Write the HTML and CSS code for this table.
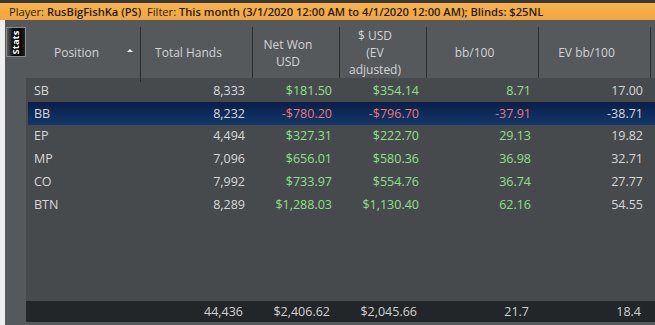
FILE: index.html
```html
<!DOCTYPE html>
<html>
<head>
<meta charset="utf-8">
<link rel="stylesheet" href="styles.css">
</head>
<body>
<div class="topstrip"></div>
<div class="filterbar">Player: <b>RusBigFishKa (PS)</b>&nbsp; Filter: <b>This month (3/1/2020 12:00 AM to 4/1/2020 12:00 AM); Blinds: $25NL</b></div>
<div class="main">
  <div class="edge"></div>
  <div class="side"><div class="tab"><span>Stats</span></div></div>
  <div class="table">
    <div class="head">
      <div class="hc pos">Position<span class="arrow"></span></div>
      <div class="hc">Total Hands</div>
      <div class="hc">Net Won<br>USD</div>
      <div class="hc">$ USD<br>(EV<br>adjusted)</div>
      <div class="hc">bb/100</div>
      <div class="hc">EV bb/100</div>
      <div class="hc last"></div>
    </div>
    <div class="rows">
      <div class="row"><span class="l">SB</span><span>8,333</span><span class="g">$181.50</span><span class="g">$354.14</span><span class="g">8.71</span><span>17.00</span></div>
      <div class="row sel"><span class="l">BB</span><span>8,232</span><span class="r">-$780.20</span><span class="r">-$796.70</span><span class="r">-37.91</span><span>-38.71</span></div>
      <div class="row"><span class="l">EP</span><span>4,494</span><span class="g">$327.31</span><span class="g">$222.70</span><span class="g">29.13</span><span>19.82</span></div>
      <div class="row"><span class="l">MP</span><span>7,096</span><span class="g">$656.01</span><span class="g">$580.36</span><span class="g">36.98</span><span>32.71</span></div>
      <div class="row"><span class="l">CO</span><span>7,992</span><span class="g">$733.97</span><span class="g">$554.76</span><span class="g">36.74</span><span>27.77</span></div>
      <div class="row"><span class="l">BTN</span><span>8,289</span><span class="g">$1,288.03</span><span class="g">$1,130.40</span><span class="g">62.16</span><span>54.55</span></div>
    </div>
    <div class="foot"><span></span><span>44,436</span><span>$2,406.62</span><span>$2,045.66</span><span>21.7</span><span>18.4</span></div>
    <div class="bottom"></div>
  </div>
</div>
</body>
</html>
```
FILE: styles.css
```css
html, body { margin: 0; padding: 0; }
body {
  width: 655px; height: 325px; overflow: hidden;
  font-family: "Open Sans", "DejaVu Sans", sans-serif;
  background: #55595c;
  display: flex; flex-direction: column;
}
.topstrip { height: 3px; background: #35393c; }
.filterbar {
  height: 17px; line-height: 17px;
  background: linear-gradient(#f8b24b, #f3a63f);
  color: #1c1c1c; font-size: 11.15px; padding-left: 9px;
  white-space: nowrap;
}
.filterbar b { font-weight: 600; }
.main { flex: 1; display: flex; min-height: 0; }
.edge { width: 5px; background: #eeeeee; }
.side { width: 21px; background: #55595c; }
.tab {
  margin: 7px 0 0 1px; width: 18px; height: 28px;
  border: 1px solid #8a8d90;
  background: linear-gradient(90deg, #5a5a5a, #000 40%, #000 70%, #222);
  display: flex; align-items: center; justify-content: center;
}
.tab span {
  transform: rotate(-90deg); color: #fff; font-size: 9.5px; font-weight: 700;
  white-space: nowrap; display: block;
}
.table { flex: 1; display: flex; flex-direction: column; }
.head, .row, .foot {
  display: grid;
  grid-template-columns: 115px 112px 87px 87px 112px 112px 1fr;
}
.head { height: 58px; background: #55595c; }
.hc {
  border-right: 1px solid #2b2e31; margin: 7px 0 4px;
  padding: 0 16px 4px 0;
  color: #d2d4d6; font-size: 12px; line-height: 17px;
  display: flex; align-items: center; justify-content: center; text-align: center;
}
.hc.pos { position: relative; padding-right: 13px; }
.hc.last { border-right: none; padding: 0; }
.arrow {
  position: absolute; left: 101px; top: 22px;
  width: 0; height: 0;
  border-left: 3px solid transparent; border-right: 3px solid transparent;
  border-bottom: 3px solid #e8e8e8;
}
.rows { flex: 1; background: #474a4d; padding-top: 1px; }
.row { height: 22.8px; align-items: center; font-size: 12.5px; color: #d6d8da; }
.row span, .foot span { text-align: right; padding-right: 8px; white-space: nowrap; }
.row span.l { text-align: left; padding-left: 8px; }
.row .g { color: #8ee08a; }
.row .r { color: #f07676; }
.row.sel {
  background: linear-gradient(#0a1e48, #12386a);
  box-shadow: inset 2px 0 0 #474a4d;
}
.foot {
  height: 21px; background: #222629; align-items: center;
  font-size: 12.5px; color: #d0d2d4;
}
.foot span { padding-right: 10px; }
.bottom { height: 3px; background: #55595c; }
```
